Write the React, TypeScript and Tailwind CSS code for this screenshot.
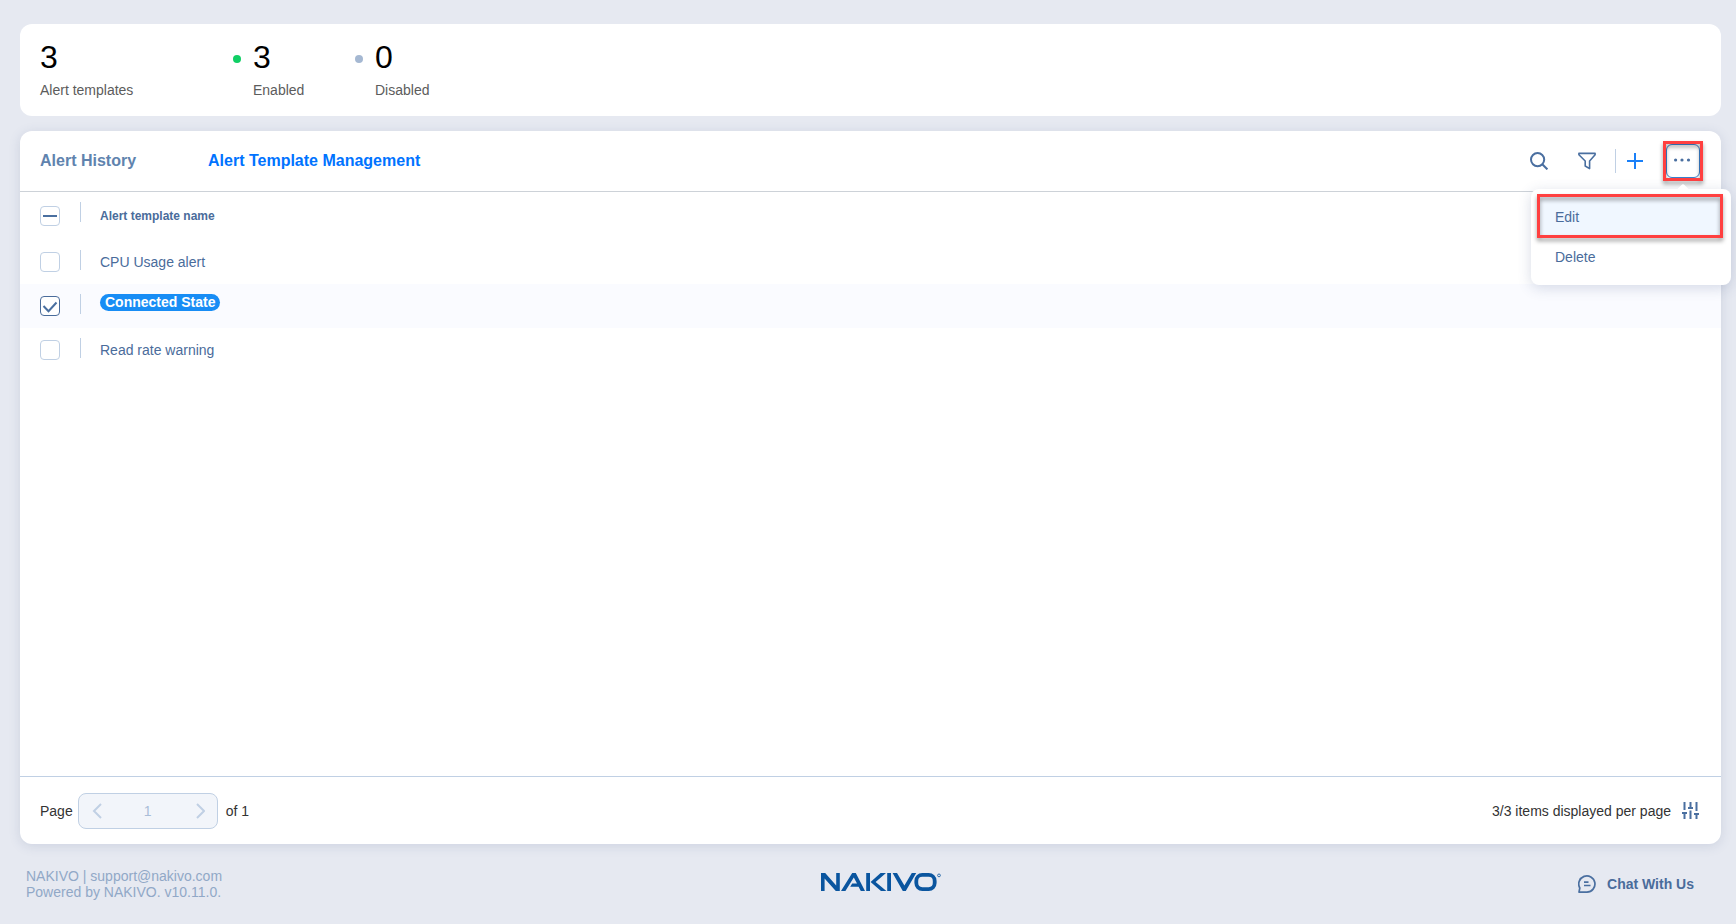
import React, { useState } from "react";

const TEMPLATES = ["CPU Usage alert", "Connected State", "Read rate warning"];

function Stat({ value, label, dot, className }: { value: number; label: string; dot?: string; className?: string }) {
  return (
    <div className={`flex gap-3 ${className ?? ""}`}>
      {dot && <span className={`mt-4 size-2 rounded-full ${dot}`} />}
      <div>
        <p className="text-[32px] leading-9 text-black">{value}</p>
        <p className="mt-[5px] text-sm text-[#5c5c5c]">{label}</p>
      </div>
    </div>
  );
}

// red frame that draws attention to the control under it
function Highlight({ className }: { className: string }) {
  return (
    <span
      aria-hidden="true"
      className={`pointer-events-none absolute border-[3px] border-[#ff4040] drop-shadow-[0_3px_2px_rgba(0,0,0,0.4)] ${className}`}
    />
  );
}

function Checkbox({
  label,
  checked,
  partial,
  onChange,
}: {
  label: string;
  checked: boolean;
  partial?: boolean;
  onChange: () => void;
}) {
  return (
    <span className="relative block size-5">
      <input
        type="checkbox"
        aria-label={label}
        checked={checked}
        onChange={onChange}
        className="block size-5 appearance-none rounded border border-[#c0d0e4] bg-white checked:border-[#4a6c9b]"
      />
      <svg
        viewBox="0 0 20 20"
        fill="none"
        stroke="#4a6fa0"
        strokeWidth="2"
        className="pointer-events-none absolute inset-0 size-5"
      >
        {partial && <path d="M3 10h14" />}
        {checked && !partial && <path d="M3.5 10l5 5.2L16.5 6.5" />}
      </svg>
    </span>
  );
}

function Logo() {
  return (
    <svg viewBox="0 0 120 18" role="img" aria-label="NAKIVO" className="h-[18px] w-[120px]" fill="#0a559f">
      <path d="M0 18V0h4.2l11 12.4V0h3.6v18h-4L3.6 5.6V18z" />
      <path d="M20 18L31.2 0h3.6L44 18h-4.2l-2.2-4.2h-8.4l2-3.2h4.8L32.8 4.4 24.4 18z" />
      <path d="M45.2 0h3.8v18h-3.8zM59.6 0h5.4L54.6 9 65.4 18H60L49.6 9z" />
      <path d="M66.2 0H70v18h-3.8z" />
      <path d="M71.6 0H76l7.4 12.6L90.8 0h4.4L84.8 18h-3z" />
      <rect x="95.3" y="1.9" width="18.4" height="14.2" rx="6" fill="none" stroke="#0a559f" strokeWidth="3.8" />
      <circle cx="118" cy="2.4" r="1.4" fill="none" stroke="#0a559f" strokeWidth="0.8" />
    </svg>
  );
}

export default function App() {
  const [selected, setSelected] = useState<string[]>(["Connected State"]);
  const [tab, setTab] = useState("Alert Template Management");
  const [menuOpen, setMenuOpen] = useState(true);

  const toggle = (name: string) =>
    setSelected(selected.includes(name) ? selected.filter((n) => n !== name) : [...selected, name]);

  const all = selected.length === TEMPLATES.length;

  return (
    <div className="flex min-h-screen flex-col bg-[#e6e9f1] pt-6 font-['Liberation_Sans',Arial,sans-serif] text-sm text-[#4a6c9b]">
      <section className="mr-[15px] ml-5 flex rounded-xl bg-white px-5 pt-[15px] pb-4">
        <Stat value={3} label="Alert templates" className="w-[193px]" />
        <Stat value={3} label="Enabled" dot="bg-[#10cf65]" className="w-[122px]" />
        <Stat value={0} label="Disabled" dot="bg-[#a5b8d2]" />
      </section>

      <main className="mt-[15px] mr-[15px] ml-5 flex flex-1 flex-col rounded-xl bg-white shadow-[0_2px_12px_rgba(60,80,130,0.15)]">
        <header className="flex h-[61px] items-center justify-between border-b border-[#cdd2d8] pr-[21px] pl-5">
          <nav className="flex gap-[72px] text-base font-bold">
            {["Alert History", "Alert Template Management"].map((name) => (
              <button
                key={name}
                type="button"
                onClick={() => setTab(name)}
                className={tab === name ? "text-[#0073ff]" : "text-[#6083ae]"}
              >
                {name}
              </button>
            ))}
          </nav>

          <div className="flex items-center">
            <button type="button" aria-label="Search" className="mr-[30px]">
              <svg viewBox="0 0 18 18" className="size-[18px]" fill="none" stroke="#4a6fa0" strokeWidth="2">
                <circle cx="7.6" cy="7.6" r="6.6" />
                <path d="M12.3 12.3L17.4 17.4" />
              </svg>
            </button>
            <button type="button" aria-label="Filter" className="mr-[19px]">
              <svg viewBox="0 0 18 18" className="size-[18px]" fill="none" stroke="#4a6fa0" strokeWidth="1.6" strokeLinejoin="round">
                <path d="M.9 1.4h16.2v1.4L11.6 9v7.6L7.2 14V9L.9 2.8z" />
              </svg>
            </button>
            <span className="mr-[11px] h-6 w-px bg-[#c0d0e4]" />
            <button type="button" aria-label="Add" className="mr-[23px]">
              <svg viewBox="0 0 16 16" className="size-4" fill="none" stroke="#1a80f8" strokeWidth="2">
                <path d="M8 0v16M0 8h16" />
              </svg>
            </button>
            <div className="relative">
              <button
                type="button"
                aria-label="More actions"
                aria-expanded={menuOpen}
                onClick={() => setMenuOpen(!menuOpen)}
                className="flex size-[34px] items-center justify-center rounded-md border border-[#3b82d0]"
              >
                <svg viewBox="0 0 18 6" className="h-1.5 w-[18px]" fill="#4a6fa0">
                  <circle cx="1.6" cy="2" r="1.6" />
                  <circle cx="8" cy="2" r="1.6" />
                  <circle cx="14.5" cy="2" r="1.6" />
                </svg>
              </button>
              <Highlight className="-inset-[3px]" />
              {menuOpen && (
                <div className="absolute top-[45px] -right-[31px] z-10 w-[200px] rounded-lg bg-white py-2 shadow-[0_3px_14px_rgba(60,80,130,0.2)]">
                  <span className="absolute -top-[3px] right-[42px] size-3 rotate-45 rounded-xs bg-white" />
                  <div className="relative px-2">
                    <button type="button" className="block h-10 w-full bg-[#f0f7ff] px-4 text-left">
                      Edit
                    </button>
                    <Highlight className="-top-[3px] right-2 -bottom-px left-[6px]" />
                  </div>
                  <div className="px-2">
                    <button type="button" className="block h-10 w-full px-4 text-left">
                      Delete
                    </button>
                  </div>
                </div>
              )}
            </div>
          </div>
        </header>

        <div className="flex-1">
          <table className="w-full text-left">
            <thead>
              <tr className="h-12">
                <th className="w-[60px] pl-5">
                  <Checkbox
                    label="Select all"
                    checked={all}
                    partial={selected.length > 0 && !all}
                    onChange={() => setSelected(all ? [] : TEMPLATES)}
                  />
                </th>
                <th className="w-5 pt-[10px] align-top">
                  <span className="block h-5 w-px bg-[#c0d0e4]" />
                </th>
                <th className="text-xs font-bold">Alert template name</th>
              </tr>
            </thead>
            <tbody>
              {TEMPLATES.map((name) => {
                const active = selected.includes(name);
                return (
                  <tr key={name} className={active ? "h-11 bg-[#fafbff]" : "h-11"}>
                    <td className="pl-5">
                      <Checkbox label={name} checked={active} onChange={() => toggle(name)} />
                    </td>
                    <td className="pt-[10px] align-top">
                      <span className="block h-5 w-px bg-[#c0d0e4]" />
                    </td>
                    <td className={active ? "pt-[10px] align-top" : ""}>
                      {active ? (
                        <span className="block w-fit rounded-full bg-[#188df5] px-[5px] text-sm leading-[17px] font-bold text-white">
                          {name}
                        </span>
                      ) : (
                        name
                      )}
                    </td>
                  </tr>
                );
              })}
            </tbody>
          </table>
        </div>

        <div className="flex h-[68px] items-center justify-between border-t border-[#c0d0e4] pr-[22px] pl-5 text-[#333]">
          <div className="flex items-center">
            <label htmlFor="page">Page</label>
            <div className="mr-2 ml-[5px] flex h-9 w-[140px] items-center justify-between rounded-lg border border-[#c0d0e4] bg-[#f2f5fa] px-3 text-[#a9bdd8]">
              <button type="button" aria-label="Previous page">
                <svg viewBox="0 0 12 16" className="h-4 w-3" fill="none" stroke="#c0d0e4" strokeWidth="2">
                  <path d="M10 1L3 8l7 7" />
                </svg>
              </button>
              <input id="page" defaultValue="1" className="w-12 text-center" />
              <button type="button" aria-label="Next page">
                <svg viewBox="0 0 12 16" className="h-4 w-3" fill="none" stroke="#c0d0e4" strokeWidth="2">
                  <path d="M4 1l7 7-7 7" />
                </svg>
              </button>
            </div>
            <span>of 1</span>
          </div>
          <div className="flex items-center gap-[11px]">
            <span>3/3 items displayed per page</span>
            <button type="button" aria-label="Items per page">
              <svg viewBox="0 0 17 17" className="size-[17px]" fill="none" stroke="#4a6fa0" strokeWidth="2">
                <path d="M2.5 0v8M0 11h5M2.5 10v7M8.5 0v6M6 6h5M8.5 8.5V17M14.5 0v9M12 12h5M14.5 11v6" />
              </svg>
            </button>
          </div>
        </div>
      </main>

      <footer className="grid h-20 grid-cols-3 items-center pr-[42px] pl-[26px]">
        <div className="leading-4 text-[#91a8c7]">
          <p>
            NAKIVO | <a href="mailto:support@nakivo.com">support@nakivo.com</a>
          </p>
          <p>Powered by NAKIVO. v10.11.0.</p>
        </div>
        <div className="flex justify-center pb-1 pl-[42px]">
          <Logo />
        </div>
        <button type="button" className="flex items-center gap-[11px] justify-self-end font-bold">
          <svg viewBox="0 0 18 18" className="size-[18px]" fill="none" stroke="#4a6fa0" strokeWidth="1.7">
            <path d="M1 17.1L1.8 13A8.1 8.1 0 1 1 9 17.1z" strokeLinejoin="round" />
            <path d="M6 7.2h4.5M6 10.5h6.5" />
          </svg>
          Chat With Us
        </button>
      </footer>
    </div>
  );
}
